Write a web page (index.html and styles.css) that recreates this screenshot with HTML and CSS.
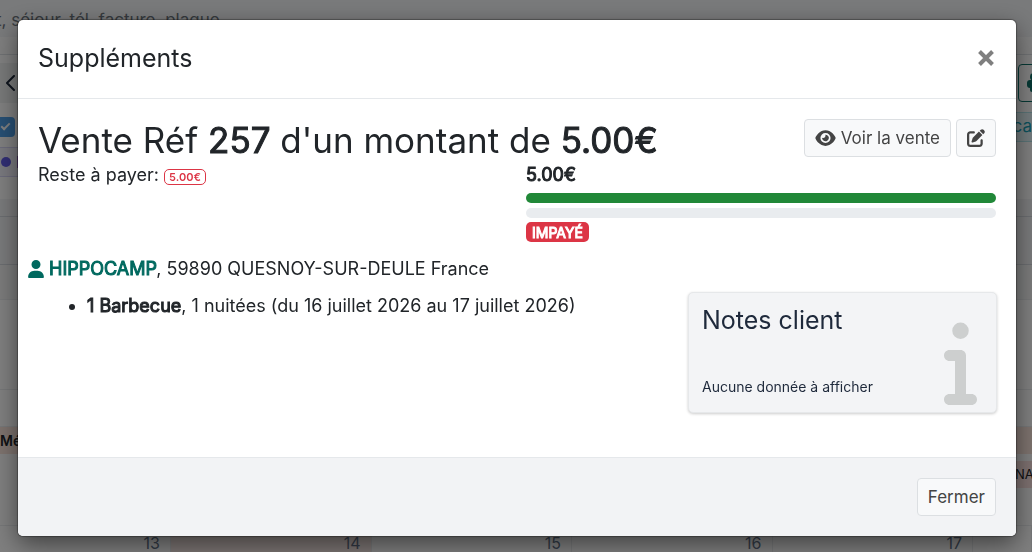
FILE: index.html
```html
<!DOCTYPE html>
<html lang="fr">
<head>
<meta charset="utf-8">
<meta name="viewport" content="width=device-width, initial-scale=1">
<title>Suppléments</title>
<link rel="stylesheet" href="styles.css">
</head>
<body>
<div class="page" inert>
  <div class="searchbar"><input class="search" type="search" aria-label="Recherche" placeholder="t, séjour, tél, facture, plaque"></div>
  <div class="strip"></div>
  <div class="toolbar">
    <button class="nav-btn" aria-label="Précédent"><svg width="10" height="16" viewBox="0 0 10 16" fill="none" stroke="currentColor" stroke-width="2" stroke-linecap="round" stroke-linejoin="round"><path d="M8 1 1 8l7 7"/></svg></button>
    <button class="user-btn" aria-label="Clients"><svg width="18" height="20" viewBox="0 0 18 20" fill="currentColor"><circle cx="7" cy="4" r="4"/><rect x="0" y="7" width="18" height="8" rx="3"/><rect x="3" y="12" width="12" height="7" rx="2"/></svg></button>
  </div>
  <div class="filters">
    <label class="tick"><input type="checkbox" checked aria-label="Afficher"></label>
    <span class="chip">ca</span>
  </div>
  <div class="legend"><span class="dot"></span><span class="mark"></span></div>
  <div class="gap"></div>
  <div class="heading"></div>
  <div class="subheading"></div>
  <div class="lane lane-first"></div>
  <div class="lane lane-second"></div>
  <div class="lane lane-third"></div>
  <div class="booking booking-orange">Mé</div>
  <div class="booking booking-pink">ANA</div>
  <div class="lane lane-last"></div>
  <div class="days"><span>13</span><span class="today">14</span><span>15</span><span>16</span><span>17</span><span></span></div>
</div>

<div class="backdrop">
  <section class="modal" role="dialog" aria-modal="true" aria-labelledby="modal-title">
    <header class="modal-header">
      <h2 class="title" id="modal-title">Suppléments</h2>
      <button class="close" aria-label="Fermer la fenêtre"><svg width="16" height="16" viewBox="0 0 16 16" fill="none" stroke="currentColor" stroke-width="4"><path d="m1.500 1.500 13 13m0-13-13 13"/></svg></button>
    </header>
    <div class="modal-body">
      <div class="sale">
        <h1 class="sale-title">Vente Réf <strong>257</strong> d'un montant de <strong>5.00€</strong></h1>
        <div class="actions">
          <button class="btn"><svg width="21" height="18" viewBox="0 0 576 512" fill="currentColor"><path d="M288 32c-80.800 0-145.500 36.800-192.600 80.600C48.600 156 17.300 208 2.500 243.700c-3.300 7.900-3.300 16.700 0 24.600C17.300 304 48.600 356 95.400 399.400C142.500 443.200 207.200 480 288 480s145.500-36.800 192.600-80.600c46.800-43.500 78.100-95.400 93-131.100c3.300-7.900 3.300-16.700 0-24.600c-14.900-35.700-46.200-87.700-93-131.100C433.500 68.800 368.800 32 288 32zM144 256a144 144 0 1 1 288 0 144 144 0 1 1-288 0zm144-64c0 35.300-28.700 64-64 64c-7.100 0-13.900-1.200-20.300-3.300c-5.500-1.800-11.900 1.600-11.700 7.400c.3 6.900 1.300 13.800 3.200 20.700c13.700 51.200 66.400 81.600 117.600 67.900s81.600-66.400 67.900-117.600c-11.100-41.500-47.800-69.400-88.600-71.100c-5.800-.2-9.200 6.100-7.400 11.700c2.100 6.400 3.300 13.200 3.300 20.300z"/></svg>Voir la vente</button>
          <button class="btn" aria-label="Modifier"><svg width="18" height="18" viewBox="0 0 512 512" fill="currentColor"><path d="M471.600 21.700c-21.900-21.900-57.300-21.900-79.200 0L362.300 51.700l97.900 97.900 30.100-30.100c21.900-21.900 21.900-57.300 0-79.200L471.600 21.700zm-299.200 220c-6.100 6.100-10.800 13.600-13.500 21.900l-29.600 88.800c-2.900 8.600-.6 18.100 5.800 24.600s15.900 8.700 24.600 5.800l88.800-29.600c8.200-2.700 15.700-7.400 21.900-13.500L437.700 172.300 339.700 74.300 172.400 241.700zM96 64C43 64 0 107 0 160V416c0 53 43 96 96 96H352c53 0 96-43 96-96V320c0-17.700-14.300-32-32-32s-32 14.300-32 32v96c0 17.700-14.300 32-32 32H96c-17.700 0-32-14.300-32-32V160c0-17.700 14.300-32 32-32h96c17.700 0 32-14.300 32-32s-14.300-32-32-32H96z"/></svg></button>
        </div>
      </div>
      <div class="payment">
        <div>Reste à payer: <span class="badge badge-outline">5.00€</span></div>
        <div class="payment-state">
          <strong class="amount">5.00€</strong>
          <div class="bar bar-full"></div>
          <div class="bar"></div>
          <strong class="badge badge-solid">IMPAYÉ</strong>
        </div>
      </div>
      <div class="client">
        <svg class="client-icon" width="16" height="18" viewBox="0 0 448 512" fill="currentColor"><path d="M224 256A128 128 0 1 0 224 0a128 128 0 1 0 0 256zm-45.700 48C79.800 304 0 383.800 0 482.300C0 498.700 13.300 512 29.700 512H418.300c16.400 0 29.700-13.300 29.700-29.700C448 383.800 368.200 304 269.700 304H178.300z"/></svg>
        <span><a class="client-name" href="#client"><strong>HIPPOCAMP</strong></a>, 59890 QUESNOY-SUR-DEULE France</span>
      </div>
      <div class="details">
        <ul class="items"><li><strong>1 Barbecue</strong>, 1 nuitées (du 16 juillet 2026 au 17 juillet 2026)</li></ul>
        <aside class="notes">
          <div class="notes-text">
            <h3 class="title notes-title">Notes client</h3>
            <p class="notes-empty">Aucune donnée à afficher</p>
          </div>
          <svg class="notes-icon" width="33" height="88" viewBox="0 0 192 512" fill="currentColor"><path d="M48 80a48 48 0 1 1 96 0A48 48 0 1 1 48 80zM0 224c0-17.700 14.300-32 32-32H96c17.700 0 32 14.300 32 32V448h32c17.700 0 32 14.300 32 32s-14.300 32-32 32H32c-17.700 0-32-14.300-32-32s14.300-32 32-32H64V256H32c-17.700 0-32-14.300-32-32z"/></svg>
        </aside>
      </div>
    </div>
    <footer class="modal-footer"><button class="btn">Fermer</button></footer>
  </section>
</div>
</body>
</html>
```
FILE: styles.css
```css
*, *::before, *::after { box-sizing: border-box; }
body {
  margin: 0;
  overflow: hidden;
  background: #fff;
  color: #212529;
  font: 400 18px/26px Inter, "Liberation Sans", sans-serif;
}
h1, h2, h3, p, ul { margin: 0; font-weight: 400; }
strong { font-weight: 400; -webkit-text-stroke: 1px currentColor; }
svg { display: block; flex: none; }
button { font: inherit; }

/* Planning behind the dialog */
.page { height: 100vh; overflow: hidden; }
.searchbar { height: 37px; background: #f3f4f6; }
.search {
  width: 100%;
  height: 37px;
  margin-left: -4px;
  padding: 2px 0 0;
  border: 0;
  background: none;
  font: inherit;
  font-size: 17px;
}
.search::placeholder { color: #6c757d; opacity: 1; }
.strip { height: 18px; background: #fcfcfc; border-bottom: 1px solid #dee2e6; }
.toolbar {
  display: flex;
  justify-content: space-between;
  align-items: center;
  height: 57px;
  padding-bottom: 2px;
}
.nav-btn {
  display: flex;
  align-items: center;
  justify-content: center;
  width: 22px;
  height: 40px;
  padding: 0;
  border: 0;
  background: #f0f2f2;
  color: #1e293b;
}
.user-btn {
  width: 36px;
  height: 38px;
  margin-right: -22px;
  padding: 0 8px;
  border: 1px solid #0b7068;
  border-radius: 4px;
  background: #fff;
  color: #0b7068;
}
.filters { display: flex; justify-content: space-between; align-items: center; height: 30px; }
.tick { display: flex; }
.tick input {
  appearance: none;
  width: 20px;
  height: 20px;
  margin: 0 0 0 -5px;
  border-radius: 4px;
  background: #4f9fe8;
}
.tick input::after {
  content: "";
  display: block;
  width: 9px;
  height: 5px;
  margin: 6px;
  border: solid #fff;
  border-width: 0 0 2px 2px;
  rotate: -45deg;
}
.chip {
  height: 30px;
  padding-left: 20px;
  border: solid #b4e6ec;
  border-width: 1px 0;
  background: #e6f7fa;
  color: #17a2b8;
  font-size: 17px;
}
.legend {
  display: flex;
  align-items: center;
  justify-content: space-between;
  width: 24px;
  height: 30px;
  margin-top: 5px;
  padding-left: 1px;
  border: solid #d7d5f5;
  border-width: 1px 0;
  background: #f3f2fd;
}
.dot { width: 10px; height: 10px; border-radius: 50%; background: #625ce8; }
.mark { width: 7px; height: 12px; background: #a06cd0; }
.gap { height: 22px; }
.heading { height: 18px; background: #f3f4f6; border-bottom: 1px solid #d6dae0; }
.subheading { height: 48px; background: #f3f4f6; border-bottom: 1px solid #d6dae0; }
.lane { border-bottom: 1px solid #eceef0; }
.lane-first { height: 35px; background: #f6f7f7; }
.lane-second { height: 90px; }
.lane-third { height: 37px; }
.lane-last { height: 38px; }
.booking { height: 27px; line-height: 27px; font-size: 14px; }
.booking-orange { background: #fbe5dc; font-weight: 600; }
.booking-pink {
  width: 32px;
  margin: 7px 0 0 auto;
  padding-left: 6px;
  background: #fbe1df;
  font-size: 13px;
}
.days {
  display: grid;
  grid-template-columns: 171px repeat(4, 1fr) 59px;
  height: 28px;
  font-size: 16px;
  line-height: 34px;
  color: #64748b;
}
.days span { padding-right: 10px; border-right: 1px solid #eceef0; text-align: right; }
.days .today { background: #f8e9e6; }

/* Dialog */
.backdrop {
  position: fixed;
  inset: 0;
  padding: 20px 16px 16px 18px;
  overflow: hidden;
  background: rgb(0 0 0 / 50%);
}
.modal {
  overflow: hidden;
  border-radius: 5px;
  background: #fff;
  box-shadow: 0 0 1px 1px rgb(0 0 0 / 30%), 0 8px 24px rgb(0 0 0 / 50%);
}
.modal-header {
  display: flex;
  justify-content: space-between;
  align-items: center;
  padding: 19px 20px 21px;
  border-bottom: 1px solid #e5e8eb;
}
.title { font-size: 25px; line-height: 38px; }
.close { padding: 2px; border: 0; background: none; color: #7f7f7f; }
.modal-body { padding: 20px; }
.sale { display: flex; justify-content: space-between; align-items: flex-start; }
.sale-title { font-size: 35px; line-height: 43px; }
.actions { display: flex; gap: 5px; }
.btn {
  display: flex;
  align-items: center;
  gap: 5px;
  height: 38px;
  padding: 0 10px;
  border: 1px solid #dcdfe2;
  border-radius: 4px;
  background: #f8f9fa;
  color: #444;
  font-size: 17px;
}
.payment { display: grid; grid-template-columns: 1fr 1fr; column-gap: 18px; }
.payment-state { display: flex; flex-direction: column; align-items: flex-start; gap: 5px; }
.bar { width: 100%; height: 10px; border-radius: 5px; background: #e9ecef; }
.bar-full { background: #218838; }
.badge { display: inline-block; border-radius: 5px; }
.badge-outline {
  padding: 0 4px;
  border: 1px solid #dc3545;
  color: #dc3545;
  font-size: 11px;
  font-weight: 600;
  line-height: 14px;
}
.badge-solid {
  margin-top: -1px;
  padding: 1px 6px 0;
  background: #dc3545;
  color: #fff;
  font-size: 14px;
  line-height: 19px;
}
.client { display: flex; align-items: center; gap: 5px; margin: 14px 0 0 -10px; }
.client-icon { color: #00695f; }
.client-name { color: #00695f; text-decoration: none; }
.details { display: flex; justify-content: space-between; margin-top: 11px; padding-bottom: 24px; }
.items { padding-left: 49px; }
.notes {
  display: flex;
  justify-content: space-between;
  align-items: flex-end;
  flex: 0 0 309px;
  height: 121px;
  margin: -1px -1px 0 0;
  padding: 8px 19px 7px 13px;
  border: 1px solid #e6e8ea;
  border-radius: 5px;
  background: #f3f4f6;
  color: #1e293b;
  box-shadow: 0 1px 3px rgb(0 0 0 / 20%);
}
.notes-text { align-self: stretch; }
.notes-title { margin-bottom: 37px; }
.notes-empty { font-size: 14px; line-height: 21px; }
.notes-icon { color: #cdcfcf; }
.modal-footer {
  display: flex;
  justify-content: flex-end;
  padding: 20px;
  border-top: 1px solid #e5e8eb;
  background: #f2f3f5;
}
```
